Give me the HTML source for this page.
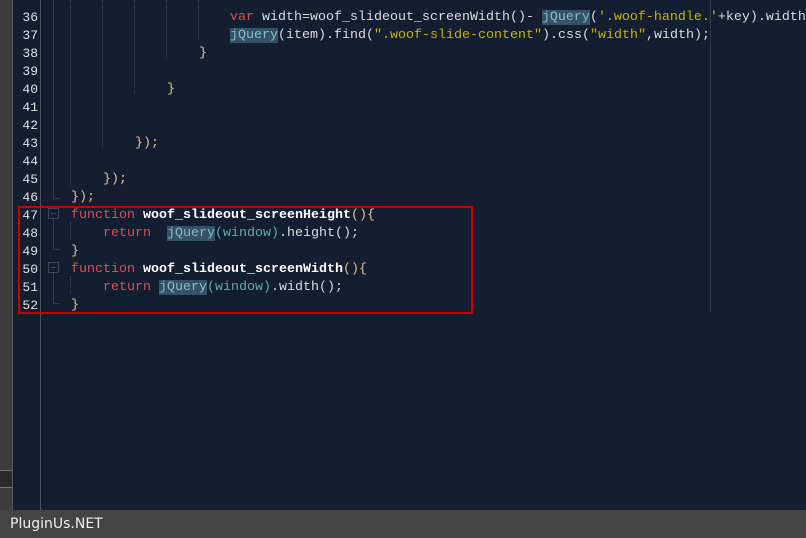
<!DOCTYPE html>
<html><head><meta charset="utf-8"><style>
body{margin:0;width:806px;height:538px;overflow:hidden;background:#131e30;position:relative;font-family:"Liberation Mono","Courier New","Nimbus Mono PS",Courier,monospace;}
.l{position:absolute;left:0;height:18px;line-height:18px;font-size:13.33px;white-space:pre;color:#dcdcdc;margin-top:3px;}
.n{position:absolute;left:22px;width:16px;text-align:right;color:#e0e0e0;font-size:13px;}
.c{position:absolute;left:71px;}
.k{color:#e0504c}.s{color:#c8b400}.f{font-weight:bold;color:#fff}.j{background:#365066;color:#7ec0d0}.w{color:#5ab0a8}.p{color:#e8c090}
.g{position:absolute;width:0;border-left:1px dotted #3a4a60;}
</style></head><body>
<div style="position:absolute;left:0;top:0;width:12px;height:510px;background:#3c3c3e"></div>
<div style="position:absolute;left:12px;top:0;width:1px;height:510px;background:#5a5a5e"></div>
<div style="position:absolute;left:0;top:470px;width:12px;height:16px;background:#2a2a2c;border-top:1px solid #777;border-bottom:1px solid #777"></div>
<div style="position:absolute;left:40px;top:0;width:1px;height:510px;background:#4e5560"></div>
<div style="position:absolute;left:710px;top:0;width:1px;height:312px;background:#2c3a4e"></div>
<div style="position:absolute;left:53px;top:0;width:1px;height:200px;background:#2c3c56"></div>
<div style="position:absolute;left:53px;top:198px;width:7px;height:1px;background:#2c3c56"></div>
<div class="g" style="left:70px;top:0;height:186px"></div>
<div class="g" style="left:102px;top:0;height:148px"></div>
<div class="g" style="left:134px;top:0;height:94px"></div>
<div class="g" style="left:166px;top:0;height:58px"></div>
<div class="g" style="left:198px;top:0;height:40px"></div>
<div class="g" style="left:70px;top:222px;height:18px"></div>
<div class="g" style="left:70px;top:276px;height:18px"></div>
<div style="position:absolute;left:48px;top:208px;width:9px;height:9px;border:1px solid #3a4a64"></div>
<div style="position:absolute;left:51px;top:213px;width:5px;height:1px;background:#3a4a64"></div>
<div style="position:absolute;left:53px;top:219px;width:1px;height:30px;background:#2c3c56"></div>
<div style="position:absolute;left:53px;top:249px;width:7px;height:1px;background:#2c3c56"></div>
<div style="position:absolute;left:48px;top:262px;width:9px;height:9px;border:1px solid #3a4a64"></div>
<div style="position:absolute;left:51px;top:267px;width:5px;height:1px;background:#3a4a64"></div>
<div style="position:absolute;left:53px;top:273px;width:1px;height:30px;background:#2c3c56"></div>
<div style="position:absolute;left:53px;top:303px;width:7px;height:1px;background:#2c3c56"></div>

<div class="l" style="top:6px"><span class="n">36</span><span class="c" style="left:230px"><span class="k">var</span> width=woof_slideout_screenWidth()- <span class="j">jQuery</span>(<span class="s">'.woof-handle.'</span>+key).width</span></div>
<div class="l" style="top:24px"><span class="n">37</span><span class="c" style="left:230px"><span class="j">jQuery</span>(item).find(<span class="s">".woof-slide-content"</span>).css(<span class="s">"width"</span>,width);</span></div>
<div class="l" style="top:42px"><span class="n">38</span><span class="c p" style="left:199px">}</span></div>
<div class="l" style="top:60px"><span class="n">39</span></div>
<div class="l" style="top:78px"><span class="n">40</span><span class="c p" style="left:167px">}</span></div>
<div class="l" style="top:96px"><span class="n">41</span></div>
<div class="l" style="top:114px"><span class="n">42</span></div>
<div class="l" style="top:132px"><span class="n">43</span><span class="c p" style="left:135px">});</span></div>
<div class="l" style="top:150px"><span class="n">44</span></div>
<div class="l" style="top:168px"><span class="n">45</span><span class="c p" style="left:103px">});</span></div>
<div class="l" style="top:186px"><span class="n">46</span><span class="c p">});</span></div>
<div class="l" style="top:204px"><span class="n">47</span><span class="c"><span class="k">function</span> <span class="f">woof_slideout_screenHeight</span><span class="p">(){</span></span></div>
<div class="l" style="top:222px"><span class="n">48</span><span class="c">    <span class="k">return</span>  <span class="j">jQuery</span><span class="w">(window)</span>.height();</span></div>
<div class="l" style="top:240px"><span class="n">49</span><span class="c p">}</span></div>
<div class="l" style="top:258px"><span class="n">50</span><span class="c"><span class="k">function</span> <span class="f">woof_slideout_screenWidth</span><span class="p">(){</span></span></div>
<div class="l" style="top:276px"><span class="n">51</span><span class="c">    <span class="k">return</span> <span class="j">jQuery</span><span class="w">(window)</span>.width();</span></div>
<div class="l" style="top:294px"><span class="n">52</span><span class="c p">}</span></div>

<div style="position:absolute;left:18px;top:206px;width:451px;height:104px;border:2px solid #d00000"></div>
<div style="position:absolute;left:0;top:510px;width:806px;height:28px;background:#444"></div>
<div style="position:absolute;left:10px;top:514px;font:14px 'DejaVu Sans',sans-serif;color:#eee;line-height:20px">PluginUs.NET</div>
</body></html>
